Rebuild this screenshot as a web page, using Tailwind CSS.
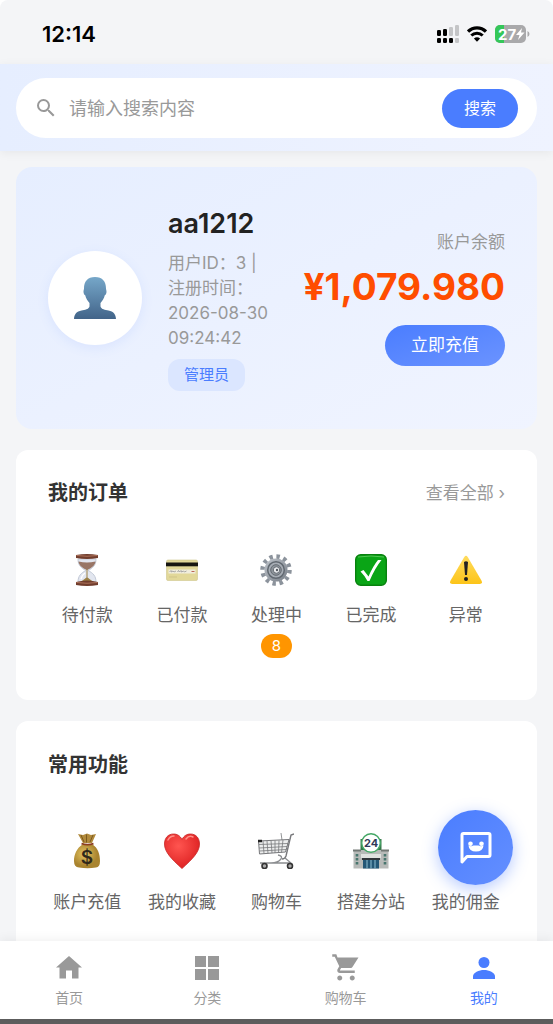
<!DOCTYPE html>
<html lang="zh-CN">
<head>
<meta charset="utf-8">
<meta name="viewport" content="width=device-width, initial-scale=1">
<title>我的</title>
<script src="https://cdn.jsdelivr.net/npm/@tailwindcss/browser@4"></script>
</head>
<body class="bg-white">
<div class="relative flex h-dvh flex-col overflow-hidden rounded-t-lg bg-[#f4f5f7] font-['Inter','Noto_Sans_CJK_SC',sans-serif] text-[#666]">

  <!-- Status bar -->
  <div class="flex h-16 shrink-0 items-center justify-between pr-[23px] pl-[42px] pt-1">
    <time class="text-[22px] font-semibold text-black">12:14</time>
    <div class="flex items-center gap-2">
      <svg class="h-[18px] w-[22px]" viewBox="0 0 22 18">
        <g fill="#000"><rect y="5" width="4" height="6" rx="1.3"/><rect x="6" y="4" width="4" height="7" rx="1.3"/><rect y="13" width="4" height="5" rx="1.3"/><rect x="6" y="13" width="4" height="5" rx="1.3"/><rect x="12" y="13" width="4" height="5" rx="1.3"/></g>
        <g fill="#c4c5c7"><rect x="12" y="2" width="4" height="9" rx="1.3"/><rect x="18" width="4" height="11" rx="1.3"/><rect x="18" y="13" width="4" height="5" rx="1.3"/></g>
      </svg>
      <svg class="h-4 w-5" viewBox="0 0 20 16" fill="none" stroke="#000">
        <path d="M1 5.600C6 .5 14 .5 19 5.600" stroke-width="3.200"/><path d="M4.300 9.500c3.200-3.100 8.200-3.100 11.400 0" stroke-width="3"/><path d="M6.900 12.500q3.100-2.500 6.200 0L10 15.800z" fill="#000" stroke="none"/>
      </svg>
      <svg class="h-[18px] w-[35px]" viewBox="0 0 35 18">
        <rect width="31" height="18" rx="5" fill="#a9a9ab"/><path d="M5 0h4v18H5a5 5 0 0 1-5-5V5a5 5 0 0 1 5-5z" fill="#34c759"/>
        <path d="M32.500 6v6q2-1 2-3t-2-3z" fill="#a9a9ab"/>
        <text x="3" y="14.500" font-size="15" font-weight="700" fill="#fff">27</text>
        <path d="M27 3L21 10h3.500l-1.500 5 6.500-7.500H26z" fill="#fff"/>
      </svg>
    </div>
  </div>

  <!-- Search -->
  <header class="relative z-10 shrink-0 bg-linear-to-r from-[#e6eeff] to-[#eff3ff] px-4 pt-[14px] pb-[13px] shadow-[0_2px_10px_rgba(0,0,0,0.06)]">
    <form class="flex h-[60px] items-center rounded-full bg-white pr-[19px] pl-[18px]">
      <svg class="size-6 shrink-0" viewBox="0 0 24 24" fill="#999"><path d="M15.500 14h-.79l-.28-.27A6.471 6.471 0 0 0 16 9.500 6.500 6.500 0 1 0 9.500 16c1.610 0 3.090-.59 4.230-1.570l.27.28v.79l5 4.990L20.490 19l-4.990-5zm-6 0C7.010 14 5 11.990 5 9.500S7.010 5 9.500 5 14 7.010 14 9.500 11.990 14 9.500 14z"/></svg>
      <input type="search" aria-label="搜索内容" placeholder="请输入搜索内容" class="ml-[11px] min-w-0 flex-1 bg-transparent text-[18px] text-[#333] outline-none placeholder:text-[#999]">
      <button type="submit" class="h-[39px] w-[76px] rounded-full bg-[#4a7dff] text-[16px] text-white">搜索</button>
    </form>
  </header>

  <main class="min-h-0 flex-1 overflow-y-auto px-4 pt-4 [scrollbar-width:none]">
    <!-- Profile -->
    <section class="flex items-center rounded-2xl bg-linear-to-br from-[#e6eeff] to-[#f0f4ff] px-8 py-[38px]">
      <div class="flex size-[94px] shrink-0 items-center justify-center rounded-full bg-white shadow-[0_3px_12px_rgba(74,125,255,0.1)]">
        <svg class="size-[42px]" viewBox="0 0 42 42"><defs><linearGradient id="bust" x2="0" y2="1"><stop stop-color="#76a7c9"/><stop offset="1" stop-color="#426489"/></linearGradient></defs>
          <path d="M21 0c-7.500 0-11 4.500-11 11.500 0 1-.6 2-.5 3.500.1 1.800 1 3 1.700 3.300.8 3 2.300 5.700 4.300 7.700v3.500c-1 3-4.500 3.300-8 4C2.500 34.500.3 37 0 42h42c-.3-5-2.500-7.500-7.500-8.500-3.500-.7-7-1-8-4V26c2-2 3.500-4.700 4.300-7.700.7-.3 1.600-1.500 1.700-3.300.1-1.500-.5-2.500-.5-3.500C32 4.500 28.500 0 21 0z" fill="url(#bust)"/></svg>
      </div>
      <div class="ml-[26px] flex flex-1 flex-col items-start">
        <h1 class="text-[27px] leading-[38px] font-semibold text-[#222]">aa1212</h1>
        <p class="mt-2 text-[17px] leading-[25px] whitespace-nowrap text-[#999]">用户ID：3 |<br>注册时间：<br>2026-08-30<br>09:24:42</p>
        <span class="mt-2 h-8 rounded-xl bg-[#dbe6ff] px-4 text-[15px] leading-8 text-[#4a7dff]">管理员</span>
      </div>
      <div class="flex flex-col items-end">
        <span class="text-[17px] leading-[25px] text-[#999]">账户余额</span>
        <strong class="mt-2 text-[37px] leading-[48px] font-bold text-[#ff4d00]">¥1,079.980</strong>
        <button type="button" class="mt-[14px] h-[41px] w-[120px] rounded-full bg-linear-to-br from-[#4a7dff] to-[#6b93ff] text-[17px] text-white">立即充值</button>
      </div>
    </section>

    <!-- Orders -->
    <section class="mt-[21px] rounded-xl bg-white px-6 pt-[29px] pb-[42px]">
      <div class="flex items-center justify-between px-2">
        <h2 class="text-[20px] leading-7 font-bold text-[#333]">我的订单</h2>
        <a href="#orders" class="text-[17px] leading-7 text-[#999]">查看全部 ›</a>
      </div>
      <div class="mt-[47px] grid grid-cols-5">
        <a href="#unpaid" class="flex flex-col items-center">
          <svg class="size-8" viewBox="0 0 32 32"><path d="M7 5h18c0 6-3 9-8 11.500C22 19 25 22 25 28H7c0-6 3-9 8-11.500C10 14 7 11 7 5z" fill="#e2e6ef" stroke="#c3cad7"/><path d="M7.500 7.500q8.500 2 17 0c-.5 4-4 6.500-8.500 8.500-4.500-2-8-4.500-8.500-8.500z" fill="#987565"/><path d="M15.500 15h1v8.500l6 4.500h-13l6-4.500z" fill="#9b8147"/><path d="M10 25q1-4 4-6" stroke="#fff" stroke-width="1.500" fill="none"/><path d="M5 1q11-2 22 0v3q-11 2-22 0zM5 28q11-3 22 0v3q-11 2-22 0z" fill="#713d2d"/><path d="M5.500 1.500q10.500 1.500 21 0M5.500 28.500q10.500 1.500 21 0" stroke="#ae735b" fill="none"/></svg>
          <span class="mt-4 text-[17px] leading-[26px]">待付款</span>
        </a>
        <a href="#paid" class="flex flex-col items-center">
          <svg class="size-8" viewBox="0 0 32 32"><rect x=".5" y="6" width="31" height="20.500" rx="1.500" fill="#e2d899" stroke="#cfc68d" stroke-width=".6"/><path d="M0 8.500h32v3.800H0z" fill="#171611"/><path d="M2.500 15.500h27v4h-27z" fill="#f0eddc"/><path d="M3.500 18l1.500-1.500.5 1.500 1.500-1 1 1 2-1M11.500 18l1-1.500 1 1.500 1.500-1.500.5 1.500 2-1 1 1 2-1" fill="none" stroke="#8c8d91" stroke-width=".7"/><path d="M25.500 17.500h3" stroke="#bd6555"/><path d="M3 23h8" stroke="#d0c589"/></svg>
          <span class="mt-4 text-[17px] leading-[26px]">已付款</span>
        </a>
        <a href="#processing" class="flex flex-col items-center">
          <svg class="size-8" viewBox="0 0 32 32"><defs><linearGradient id="metal" x2="1" y2="1"><stop stop-color="#bfc4cb"/><stop offset="1" stop-color="#777e87"/></linearGradient></defs><circle cx="16" cy="16" r="13.500" fill="none" stroke="#8c939c" stroke-width="4.500" stroke-dasharray="3.400 3.670"/><circle cx="16" cy="16" r="11.500" fill="url(#metal)"/><circle cx="16" cy="16" r="8.300" fill="#a7adb5" stroke="#626971" stroke-width="1.500"/><circle cx="16" cy="16" r="5.300" fill="#8c939a" stroke="#656b72"/><circle cx="16.500" cy="16" r="3.200" fill="#eceef0" stroke="#555c64" stroke-width=".8"/><circle cx="17" cy="16" r="1.200" fill="#555b62"/></svg>
          <span class="mt-4 text-[17px] leading-[26px]">处理中</span>
          <span class="mt-[6px] h-6 rounded-full bg-[#ff9500] px-[11px] text-[15px] leading-6 text-white">8</span>
        </a>
        <a href="#done" class="flex flex-col items-center">
          <svg class="size-8" viewBox="0 0 32 32"><rect x=".7" y=".7" width="30.600" height="30.600" rx="5" fill="#0aa516" stroke="#08820e" stroke-width="1.400"/><path d="M3 3q13-2 26 0" stroke="#63cf62" stroke-width=".8" fill="none"/><path d="M5.500 17.500l3-1.500 5 6.500Q18 12 23 6h3.500Q20 14 14.500 27H12.500Q10 22 5.500 17.500z" fill="#fff"/></svg>
          <span class="mt-4 text-[17px] leading-[26px]">已完成</span>
        </a>
        <a href="#abnormal" class="flex flex-col items-center">
          <svg class="size-8" viewBox="0 0 32 32"><defs><linearGradient id="warn" x2="0" y2="1"><stop stop-color="#ffdc5e"/><stop offset="1" stop-color="#fcc419"/></linearGradient></defs><path d="M14.300 3q1.700-2.500 3.400 0l14 24q1 3-2 3H2.300q-3 0-2-3z" fill="url(#warn)"/><path d="M14 8q2-1.500 4 0L17 21h-2z" fill="#222"/><circle cx="16" cy="25" r="2" fill="#222"/></svg>
          <span class="mt-4 text-[17px] leading-[26px]">异常</span>
        </a>
      </div>
    </section>

    <!-- Common functions -->
    <section class="mt-[21px] rounded-xl bg-white px-6 pt-[30px] pb-[42px]">
      <h2 class="px-2 text-[20px] leading-7 font-bold text-[#333]">常用功能</h2>
      <div class="mt-[54px] grid grid-cols-5">
        <a href="#recharge" class="flex flex-col items-center">
          <svg class="size-9" viewBox="0 0 36 36"><defs><radialGradient id="bag" cx=".4" cy=".4"><stop stop-color="#e6c662"/><stop offset="1" stop-color="#a9842f"/></radialGradient></defs><path d="M9 1l5 1 4-1.500L22 2l5-1-4 9H14z" fill="#b18a3c"/><path d="M12 2l3 7M17.500 1.500v8M24 2l-3 7" stroke="#7b591e" fill="none"/><path d="M13.500 11.500h10C29 15 31 21 31 28q0 6-4 6.500-8.500 1.500-17 0-5-.5-5-6.500c0-7 3-13 8.500-16.500z" fill="url(#bag)"/><path d="M12.500 10.700q6 2 12 0" stroke="#8c3e20" stroke-width="1.800" fill="none"/><text x="18" y="30.500" text-anchor="middle" font-size="19" font-weight="600" fill="#30291b">$</text></svg>
          <span class="mt-5 text-[17px] leading-[26px]">账户充值</span>
        </a>
        <a href="#favorites" class="flex flex-col items-center">
          <svg class="size-9" viewBox="0 0 36 36"><defs><radialGradient id="heart" cx=".4" cy=".35" r=".7"><stop stop-color="#ff5550"/><stop offset="1" stop-color="#dc1f20"/></radialGradient></defs><path d="M18 6.500C20 2.500 23 1 26.500 1 32 1 35.500 5 35.500 11c0 8-7 15-17.500 24.500C7.500 26 .5 19 .5 11 .5 5 4 1 9.500 1 13 1 16 2.500 18 6.500z" fill="url(#heart)" stroke="#c62626" stroke-width=".8"/><path d="M4 7q2-4 6-4M22 6q3-4 7-2" stroke="#ff9189" stroke-width="1.500" stroke-linecap="round" fill="none"/></svg>
          <span class="mt-5 text-[17px] leading-[26px]">我的收藏</span>
        </a>
        <a href="#cart" class="flex flex-col items-center">
          <svg class="size-9" viewBox="0 0 36 36" fill="none" stroke="#77787b"><path d="M36 1l-3 1-5 21q-1 3-4 3" stroke-width="1.400"/><path d="M.5 8L31 6.500 27.500 19 1.500 21z" fill="#eceded" stroke-width="1"/><path d="M1 11.500l29-1M1 15l28-1.500M1.500 18l27-1.500M5 8l1 12.500M9 8l1 12.500M13 7.500l1 12.500M17 7.500V20M21 7.500L20.500 20M25 7l-1.500 12.500M23 0l1 7" stroke-width=".8"/><path d="M0 8h4" stroke="#222" stroke-width="2.500"/><path d="M20 22q5 1 3 4-3 4-10 4H4M2 30h31l-6-5" stroke="#8b8d90" stroke-width="1.300"/><circle cx="6.500" cy="33" r="2.500" fill="#aaa" stroke="#333" stroke-width="1.600"/><circle cx="32" cy="33" r="2.500" fill="#aaa" stroke="#333" stroke-width="1.600"/></svg>
          <span class="mt-5 text-[17px] leading-[26px]">购物车</span>
        </a>
        <a href="#substation" class="flex flex-col items-center">
          <svg class="size-9" viewBox="0 0 36 36"><path d="M7.500 6h21v15h-21z" fill="#36784b"/><path d="M.5 17h35v18.500H.5z" fill="#b7bab8"/><path d="M0 16.500h8v2H0zM28 16.500h8v2h-8z" fill="#727875"/><path d="M8 21h20v4H8z" fill="#e0e2e0"/><path d="M10 25.500h16v10H10z" fill="#245776"/><path d="M14 26v9.500M18 26v9.500M22 26v9.500" stroke="#8fc0d2"/><path d="M9 25h18v2H9z" fill="#30353a"/><path d="M4 21v12M32 21v12" stroke="#49766e" stroke-width="2.600" stroke-dasharray="2.500 1.500"/><circle cx="18" cy="10" r="9.300" fill="#fff" stroke="#44a765" stroke-width="1.400"/><text x="18" y="13.800" text-anchor="middle" font-size="11" font-weight="700" fill="#303958">24</text></svg>
          <span class="mt-5 text-[17px] leading-[26px]">搭建分站</span>
        </a>
        <a href="#commission" class="flex flex-col items-center">
          <svg class="size-9" viewBox="0 0 36 36"><path d="M4 10h28v18H4z" fill="#7fae74"/><circle cx="18" cy="19" r="5" fill="#dceacb"/></svg>
          <span class="mt-5 text-[17px] leading-[26px]">我的佣金</span>
        </a>
      </div>
    </section>
  </main>

  <!-- Floating chat button -->
  <button type="button" aria-label="在线客服" class="absolute right-10 bottom-[139px] z-20 flex size-[75px] items-center justify-center rounded-full bg-linear-to-br from-[#4a7dff] to-[#648fff] shadow-[0_4px_16px_rgba(74,125,255,0.4)]">
    <svg class="h-[32px] w-[32px]" viewBox="0 0 32 32"><path d="M2 30V3q0-1.500 1.500-1.500h25Q30 1.500 30 3v20q0 1.500-1.500 1.500H7z" fill="none" stroke="#fff" stroke-width="3" stroke-linejoin="round"/><path d="M8.500 13.500q2.500 1.500 5 0h5q2.500 1.500 5 0-.5 6-7.500 6t-7.500-6z" fill="#fff"/><circle cx="10.500" cy="11.700" r="2.300" fill="#fff"/><circle cx="21.500" cy="11.700" r="2.300" fill="#fff"/></svg>
  </button>

  <!-- Tab bar -->
  <nav class="relative z-10 grid h-[78px] shrink-0 grid-cols-4 bg-white pt-3 text-[14px] leading-5 text-[#999] shadow-[0_-2px_10px_rgba(0,0,0,0.06)]">
    <a href="#home" class="flex flex-col items-center gap-[5px]">
      <svg class="size-[30px]" viewBox="0 0 30 30" fill="currentColor"><path d="M12 25.500v-8h6v8h6.500v-11H28L15 3 2 14.500h3.500v11z"/></svg>首页</a>
    <a href="#category" class="flex flex-col items-center gap-[5px]">
      <svg class="size-[30px]" viewBox="0 0 30 30" fill="currentColor"><path d="M3 3h11v11H3zM16 3h11v11H16zM3 16h11v11H3zM16 16h11v11H16z"/></svg>分类</a>
    <a href="#shopping" class="flex flex-col items-center gap-[5px]">
      <svg class="size-[30px]" viewBox="0 0 24 24" fill="currentColor"><path d="M7 18c-1.100 0-1.990.9-1.990 2S5.900 22 7 22s2-.9 2-2-.9-2-2-2zM1 1v2h2l3.600 7.590-1.350 2.450c-.16.280-.25.610-.25.960 0 1.100.9 2 2 2h12v-2H7.420c-.14 0-.25-.11-.25-.25l.03-.12.900-1.630h7.450c.75 0 1.410-.41 1.750-1.030L22 3.500H5.210L4.270 1H1zm16 17c-1.100 0-1.990.9-1.990 2s.89 2 1.990 2 2-.9 2-2-.9-2-2-2z"/></svg>购物车</a>
    <a href="#me" aria-current="page" class="flex flex-col items-center gap-[5px] text-[#4a7dff]">
      <svg class="size-[30px]" viewBox="0 0 30 30" fill="currentColor"><circle cx="15" cy="9.500" r="5.500"/><path d="M4 26v-2.500C4 19.500 10 17 15 17s11 2.500 11 6.500V26z"/></svg>我的</a>
  </nav>
  <div class="h-[5px] shrink-0 bg-[#5e5e5e]"></div>
</div>
</body>
</html>
